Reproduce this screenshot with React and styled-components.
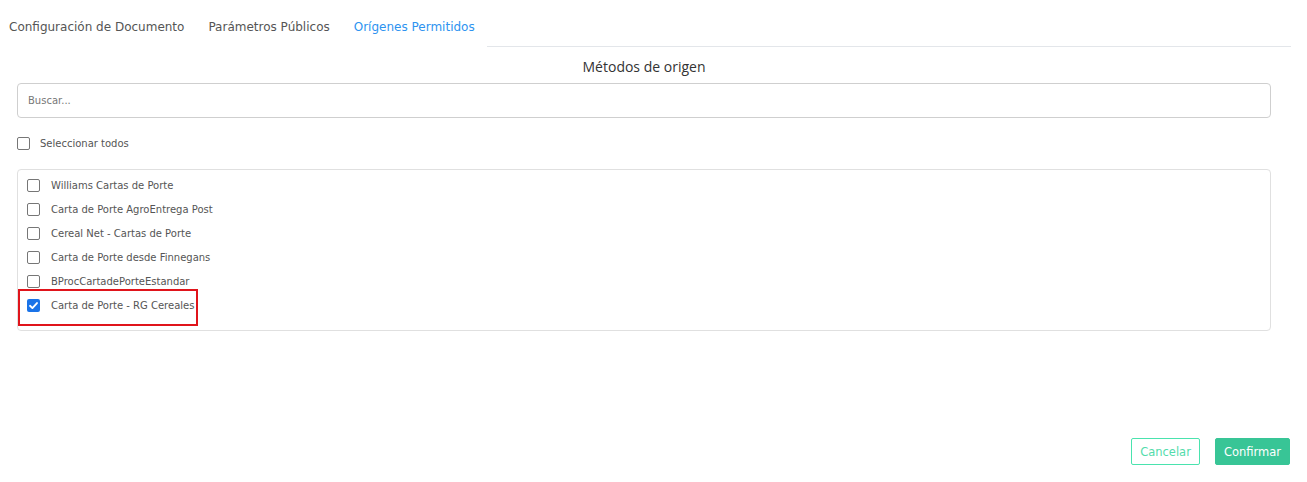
import React, { useState } from "react";
import styled, { createGlobalStyle } from "styled-components";

const Global = createGlobalStyle`
  html, body { margin: 0; padding: 0; background: #fff; }
  body { font-family: "DejaVu Sans", sans-serif; }
  * { box-sizing: border-box; }
`;

const Page = styled.div`
  width: 1307px;
  height: 482px;
  padding: 0 17px 0 9px;
  display: flex;
  flex-direction: column;
`;

const Tabs = styled.div`
  display: flex;
  align-items: flex-end;
  height: 47px;
`;

const Tab = styled.div`
  font-size: 12px;
  color: ${(p) => (p.$active ? "#2d93f0" : "#555")};
  padding-bottom: 13px;
  margin-right: 24px;
  letter-spacing: 0;
  white-space: nowrap;
`;

const TabLine = styled.div`
  flex: 1;
  align-self: flex-end;
  border-bottom: 1px solid #e3e6ea;
  margin-right: -1px;
  margin-left: -12px;
`;

const Body = styled.div`
  display: flex;
  flex-direction: column;
  padding-left: 8px;
  padding-right: 19px;
  flex: 1;
`;

const Title = styled.div`
  font-family: "Open Sans", sans-serif;
  font-size: 14px;
  color: #333;
  text-align: center;
  margin-top: 10px;
  line-height: 19px;
`;

const Search = styled.input`
  margin-top: 7px;
  height: 35px;
  border: 1px solid #cfcfcf;
  border-radius: 4px;
  padding: 0 10px;
  font-family: "DejaVu Sans", sans-serif;
  font-size: 10px;
  outline: none;
  &::placeholder { color: #777; }
`;

const CheckBox = styled.span`
  width: 13px;
  height: 13px;
  border-radius: 2px;
  flex: none;
  display: inline-flex;
  align-items: center;
  justify-content: center;
  border: ${(p) => (p.$checked ? "none" : "1px solid #767676")};
  background: ${(p) => (p.$checked ? "#1a73e8" : "#fff")};
`;

const Row = styled.label`
  display: flex;
  align-items: center;
  gap: ${(p) => p.$gap || 11}px;
  font-size: 10px;
  color: #555;
  cursor: pointer;
`;

const SelectAll = styled(Row)`
  margin-top: 14px;
  height: 22px;
`;

const ListBox = styled.div`
  margin-top: 15px;
  border: 1px solid #e0e0e0;
  border-radius: 4px;
  padding: 3px 9px 6px 9px;
  display: flex;
  flex-direction: column;
  height: 162px;
`;

const Item = styled(Row)`
  height: 24px;
  flex: none;
  position: relative;
`;

const Highlight = styled.div`
  position: absolute;
  left: -9px;
  top: -4px;
  width: 180px;
  height: 37px;
  border: 2px solid #e0141b;
  pointer-events: none;
`;

const Footer = styled.div`
  margin-top: auto;
  display: flex;
  justify-content: flex-end;
  gap: 15px;
  padding-bottom: 17px;
  margin-right: -19px;
`;

const Button = styled.button`
  height: 27px;
  padding: 0 8px;
  border-radius: 2px;
  font-family: "DejaVu Sans", sans-serif;
  font-size: 11.5px;
  cursor: pointer;
  border: 1px solid ${(p) => (p.$primary ? "#38c596" : "#4ae3ae")};
  background: ${(p) => (p.$primary ? "#38c596" : "#fff")};
  color: ${(p) => (p.$primary ? "#fff" : "#52dcab")};
`;

const Check = () => (
  <svg width="11" height="11" viewBox="0 0 12 12">
    <path d="M2.2 6.3 L4.8 8.8 L9.8 3.3" fill="none" stroke="#fff" strokeWidth="2" strokeLinecap="round" strokeLinejoin="round" />
  </svg>
);

const items = [
  "Williams Cartas de Porte",
  "Carta de Porte AgroEntrega Post",
  "Cereal Net - Cartas de Porte",
  "Carta de Porte desde Finnegans",
  "BProcCartadePorteEstandar",
  "Carta de Porte - RG Cereales",
];

export default function App() {
  const [checked, setChecked] = useState([5]);
  const [all, setAll] = useState(false);
  const toggle = (i) =>
    setChecked((c) => (c.includes(i) ? c.filter((x) => x !== i) : [...c, i]));
  return (
    <>
      <Global />
      <Page>
        <Tabs>
          <Tab>Configuración de Documento</Tab>
          <Tab>Parámetros Públicos</Tab>
          <Tab $active>Orígenes Permitidos</Tab>
          <TabLine />
        </Tabs>
        <Body>
          <Title>Métodos de origen</Title>
          <Search placeholder="Buscar..." />
          <SelectAll $gap={10} onClick={() => setAll((a) => !a)}>
            <CheckBox $checked={all}>{all && <Check />}</CheckBox>
            Seleccionar todos
          </SelectAll>
          <ListBox>
            {items.map((t, i) => {
              const on = checked.includes(i);
              return (
                <Item key={t} onClick={() => toggle(i)}>
                  <CheckBox $checked={on}>{on && <Check />}</CheckBox>
                  {t}
                  {i === 5 && <Highlight />}
                </Item>
              );
            })}
          </ListBox>
          <Footer>
            <Button>Cancelar</Button>
            <Button $primary>Confirmar</Button>
          </Footer>
        </Body>
      </Page>
    </>
  );
}
